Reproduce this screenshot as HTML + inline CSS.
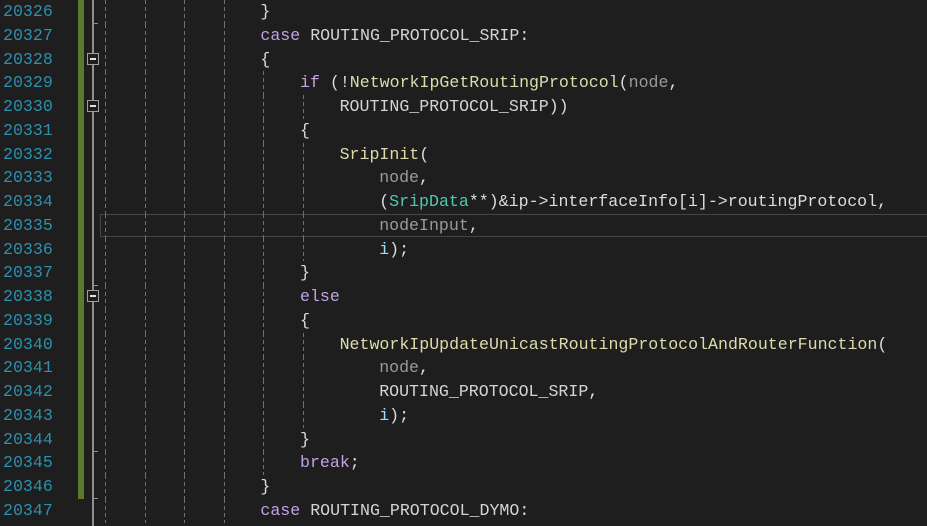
<!DOCTYPE html>
<html><head><meta charset="utf-8"><style>
body{margin:0;width:927px;height:526px;background:#1e1e1e;overflow:hidden;position:relative;font-family:"Liberation Mono",monospace;font-size:16.6px}
.r{position:absolute;left:0;width:927px;height:23.75px;line-height:23.75px;white-space:pre}
.n{position:absolute;left:3px;color:#2b91af}
.c{position:absolute;left:102px;color:#dcdcdc}
.g{position:absolute;top:0;width:1px;height:23.75px;background:repeating-linear-gradient(to bottom,#707070 0 4px,transparent 4px 7px)}
.k{color:#c4a0e6}.f{color:#dcdcaa}.t{color:#4ec9b0}.p{color:#9a9a9a}.v{color:#9cdcfe}.e{color:#d4d4d4}
#bar{position:absolute;left:78px;top:0;width:6px;height:499px;background:#5a7a2e}
#fold{position:absolute;left:92px;top:0;width:2px;height:526px;background:#8f8f8f}
.box{position:absolute;left:87px;width:10px;height:10px;border:1px solid #a0a0a0;background:#1e1e1e}
.box:after{content:"";position:absolute;left:2px;top:4px;width:6px;height:2px;background:#e0e0e0}
.tick{position:absolute;left:93px;width:5px;height:1px;background:#8f8f8f}
#cur{position:absolute;left:100px;top:214px;width:827px;height:21px;border:1px solid #464646;border-right:none}
</style></head><body>
<div id="bar"></div><div id="fold"></div>
<div class="tick" style="top:23px"></div>
<div class="tick" style="top:285px"></div>
<div class="tick" style="top:451px"></div>
<div class="tick" style="top:498px"></div>
<div class="box" style="top:53px"></div>
<div class="box" style="top:100px"></div>
<div class="box" style="top:290px"></div>
<div id="cur"></div>
<div id="lines"></div>
<script>
var L=[
["20326",16,16,'<span>}</span>'],
["20327",16,16,'<span class="k">case</span> <span class="e">ROUTING_PROTOCOL_SRIP</span>:'],
["20328",16,16,'{'],
["20329",20,20,'<span class="k">if</span> (!<span class="f">NetworkIpGetRoutingProtocol</span>(<span class="p">node</span>,'],
["20330",24,24,'<span class="e">ROUTING_PROTOCOL_SRIP</span>))'],
["20331",20,20,'{'],
["20332",24,24,'<span class="f">SripInit</span>('],
["20333",28,24,'<span class="p">node</span>,'],
["20334",28,24,'(<span class="t">SripData</span>**)&amp;ip-&gt;interfaceInfo[i]-&gt;routingProtocol,'],
["20335",28,24,'<span class="p">nodeInput</span>,'],
["20336",28,24,'<span class="v">i</span>);'],
["20337",20,20,'}'],
["20338",20,20,'<span class="k">else</span>'],
["20339",20,20,'{'],
["20340",24,24,'<span class="f">NetworkIpUpdateUnicastRoutingProtocolAndRouterFunction</span>('],
["20341",28,24,'<span class="p">node</span>,'],
["20342",28,24,'<span class="e">ROUTING_PROTOCOL_SRIP</span>,'],
["20343",28,24,'<span class="v">i</span>);'],
["20344",20,20,'}'],
["20345",20,20,'<span class="k">break</span>;'],
["20346",16,16,'}'],
["20347",16,16,'<span class="k">case</span> <span class="e">ROUTING_PROTOCOL_DYMO</span>:']
];
var h='';
L.forEach(function(l,i){
 var top=(i*23.75).toFixed(2);
 h+='<div class="r" style="top:'+top+'px"><span class="n">'+l[0]+'</span>';
 for(var c=0;c<l[2];c+=4){h+='<span class="g" style="left:'+Math.round(105+c*9.9)+'px"></span>';}
 h+='<span class="c" style="left:'+(102+l[1]*9.9).toFixed(1)+'px">'+l[3]+'</span></div>';
});
document.getElementById('lines').innerHTML=h;
</script>
</body></html>
